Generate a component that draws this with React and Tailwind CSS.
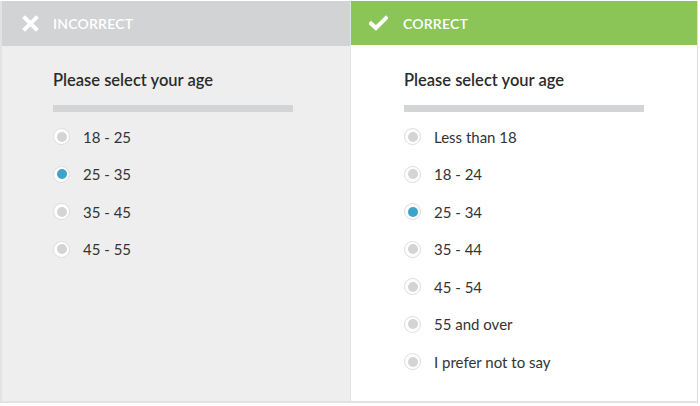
import React from "react";

function Radio({ selected }) {
  return (
    <span className="flex h-[17px] w-[17px] items-center justify-center rounded-full border border-[#dcdcdc] bg-white shrink-0">
      <span className={"block h-[10px] w-[10px] rounded-full " + (selected ? "bg-[#3da3c9]" : "bg-[#d3d4d6]")} />
    </span>
  );
}

function Option({ label, selected }) {
  return (
    <div className="flex h-[37.5px] items-center gap-[13px]">
      <Radio selected={selected} />
      <span className="text-[15px] text-[#333333]">{label}</span>
    </div>
  );
}

function Panel({ options, selectedIndex, pad }) {
  return (
    <div className={pad + " pt-[22px]"}>
      <div className="text-[16.5px] font-semibold text-[#2b2b2b] leading-[24px]">Please select your age</div>
      <div className="mt-[13px] h-[7px] w-[240px] bg-[#d3d4d6]" />
      <div className="mt-[6px] flex flex-col">
        {options.map((o, i) => (
          <Option key={o} label={o} selected={i === selectedIndex} />
        ))}
      </div>
    </div>
  );
}

export default function App() {
  return (
    <div className="w-[700px] h-[406px] bg-white pt-[1px]" style={{ fontFamily: "Lato, 'Open Sans', sans-serif" }}>
      <div className="flex h-[402px] w-[698px] border-l-2 border-b-2 border-[#e3e3e3]">
        <div className="w-[348px] bg-[#eeeeee] flex flex-col">
          <div className="h-[45px] bg-[#d2d3d5] flex items-center pl-[20px] gap-[14px]">
            <svg width="17" height="17" viewBox="0 0 17 17">
              <path d="M3 3 L14 14 M14 3 L3 14" stroke="white" strokeWidth="4" strokeLinecap="square" />
            </svg>
            <span className="text-[14px] font-semibold text-white tracking-[0.2px]">INCORRECT</span>
          </div>
          <Panel pad="pl-[51px]" options={["18 - 25", "25 - 35", "35 - 45", "45 - 55"]} selectedIndex={1} />
        </div>
        <div className="flex-1 bg-white border-l border-[#e3e3e3] border-r border-r-[#dddddd] flex flex-col">
          <div className="h-[44px] bg-[#8bc557] flex items-center pl-[18px] gap-[15px]">
            <svg width="19" height="16" viewBox="0 0 19 16">
              <path d="M2 8.5 L7 13 L17 3" stroke="white" strokeWidth="4" fill="none" strokeLinecap="square" />
            </svg>
            <span className="text-[14px] font-semibold text-white tracking-[0.2px]">CORRECT</span>
          </div>
          <div className="pt-[1px]">
            <Panel
              pad="pl-[53px]"
              options={["Less than 18", "18 - 24", "25 - 34", "35 - 44", "45 - 54", "55 and over", "I prefer not to say"]}
              selectedIndex={2}
            />
          </div>
        </div>
      </div>
    </div>
  );
}
